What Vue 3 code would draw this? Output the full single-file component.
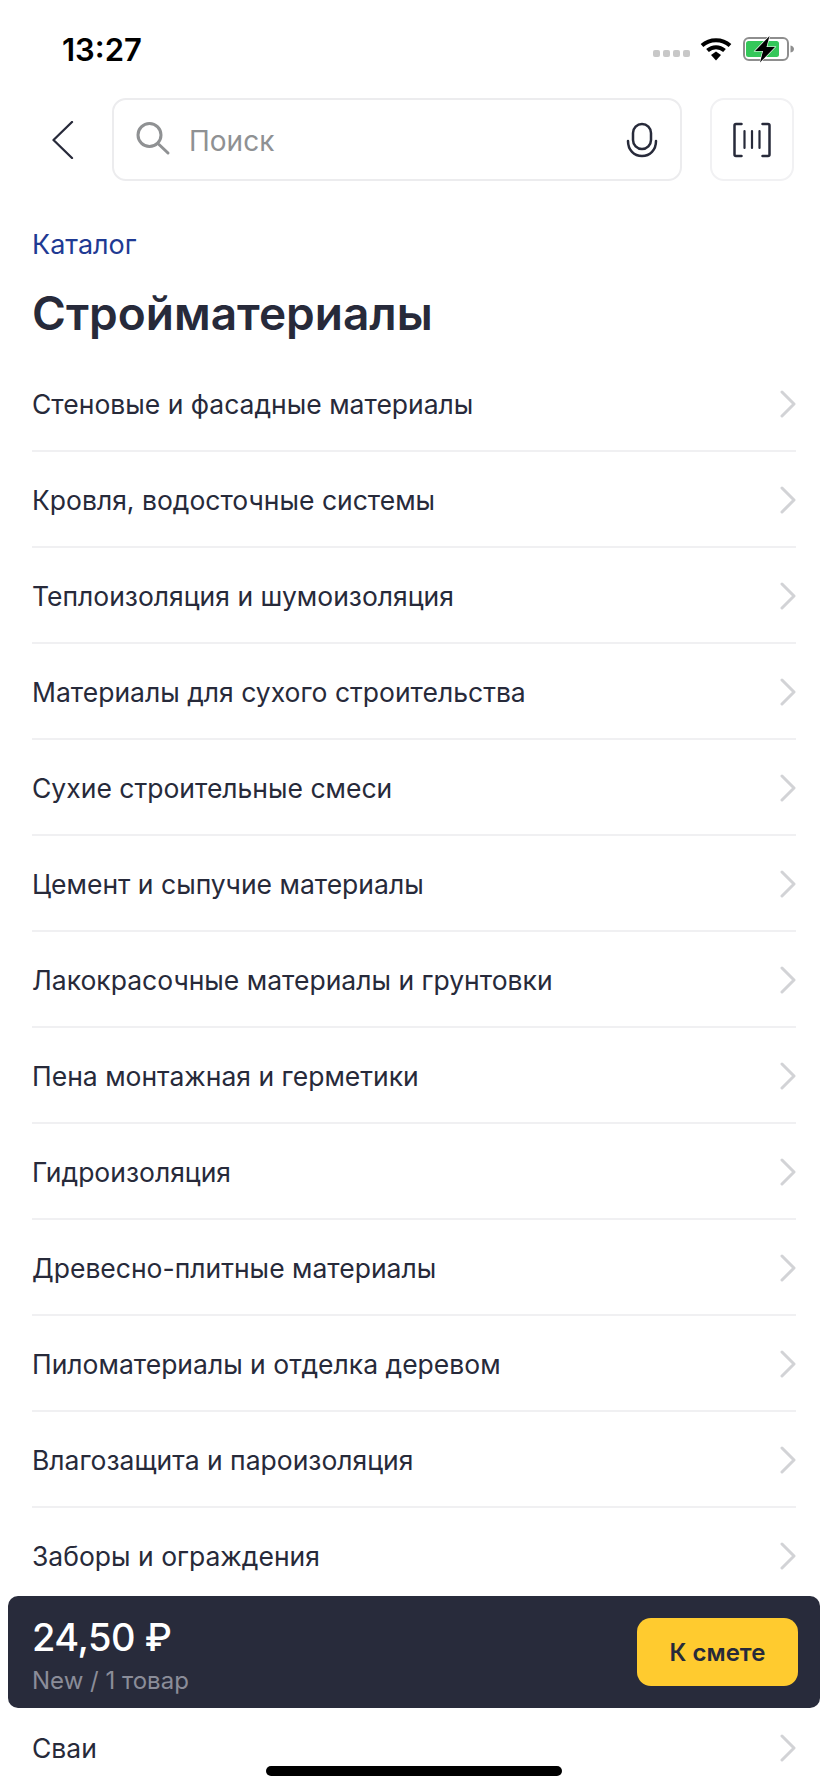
<script setup>
// categories, one entry is hidden under the estimate bar
const categories = [
  'Стеновые и фасадные материалы',
  'Кровля, водосточные системы',
  'Теплоизоляция и шумоизоляция',
  'Материалы для сухого строительства',
  'Сухие строительные смеси',
  'Цемент и сыпучие материалы',
  'Лакокрасочные материалы и грунтовки',
  'Пена монтажная и герметики',
  'Гидроизоляция',
  'Древесно-плитные материалы',
  'Пиломатериалы и отделка деревом',
  'Влагозащита и пароизоляция',
  'Заборы и ограждения',
  '',
  'Сваи'
]
</script>

<template>
  <div class="page">
    <div class="status">
      <span class="time">13:27</span>
      <div class="status-icons">
        <div class="dots"><i></i><i></i><i></i><i></i></div>
        <svg class="wifi" width="32" height="24" viewBox="0 0 32 24">
          <path d="M2 8.500C9.800 1.500 22.200 1.500 30 8.500" fill="none" stroke="#000" stroke-width="4" />
          <path d="M7.500 13.500C12.500 9 19.500 9 24.500 13.500" fill="none" stroke="#000" stroke-width="4" />
          <path d="M11 18L16 14.500L21 18L16 23.500Z" fill="#000" />
        </svg>
        <svg class="battery" width="52" height="28" viewBox="0 0 52 28">
          <rect x="1" y="3" width="44" height="22" rx="5" fill="none" stroke="#8e8e8e" stroke-width="2" />
          <rect x="3" y="6" width="33" height="16" rx="2.500" fill="#34c759" />
          <path d="M47.500 10.500C50 11 51 12.500 51 14C51 15.500 50 17 47.500 17.500Z" fill="#8e8e8e" />
          <path d="M26.500 1L12 16H20L17 27.500L32 12H23.500Z" fill="#000" stroke="#fff" stroke-width="1.200" paint-order="stroke" />
        </svg>
      </div>
    </div>

    <div class="search-row">
      <svg class="back" width="24" height="38" viewBox="0 0 24 38">
        <path d="M20 1L1.500 19L20 37" fill="none" stroke="#272a3a" stroke-width="2.300" stroke-linecap="round" stroke-linejoin="round" />
      </svg>
      <div class="search">
        <svg width="36" height="36" viewBox="0 0 36 36">
          <circle cx="13.500" cy="13" r="11.500" fill="none" stroke="#8f9193" stroke-width="3" />
          <path d="M23 22.500L32 31" stroke="#8f9193" stroke-width="3" stroke-linecap="round" />
        </svg>
        <span class="placeholder">Поиск</span>
        <svg class="mic" width="32" height="36" viewBox="0 0 32 36">
          <rect x="7" y="2" width="18" height="25" rx="9" fill="none" stroke="#272a3a" stroke-width="2.500" />
          <path d="M2 19C2 28 8 34 16 34C24 34 30 28 30 19" fill="none" stroke="#272a3a" stroke-width="2.500" stroke-linecap="round" />
        </svg>
      </div>
      <div class="scan">
        <svg width="40" height="36" viewBox="0 0 40 36">
          <path d="M9.500 2H4Q2.500 2 2.500 3.500V32.500Q2.500 34 4 34H9.500M30.500 2H36Q37.500 2 37.500 3.500V32.500Q37.500 34 36 34H30.500" fill="none" stroke="#272a3a" stroke-width="2.500" stroke-linecap="round" stroke-linejoin="round" />
          <path d="M12.500 9V26M20 9V26M27.500 9V26" stroke="#272a3a" stroke-width="2.200" stroke-linecap="round" />
        </svg>
      </div>
    </div>

    <a class="crumb">Каталог</a>
    <h1>Стройматериалы</h1>

    <ul class="list">
      <li v-for="(name, i) in categories" :key="i">
        <span>{{ name }}</span>
        <svg width="16" height="28" viewBox="0 0 16 28">
          <path d="M2 2L14 14L2 26" fill="none" stroke="#d2d3d6" stroke-width="3" stroke-linecap="round" stroke-linejoin="round" />
        </svg>
      </li>
    </ul>

    <div class="estimate">
      <div class="sum">
        <div class="price">24,50 ₽</div>
        <div class="sub">New / 1 товар</div>
      </div>
      <button class="to-estimate">К смете</button>
    </div>
    <div class="home"></div>
  </div>
</template>

<style scoped>
.page {
  position: relative;
  width: 828px;
  height: 1792px;
  overflow: hidden;
  background: #fff;
  font-family: Inter, "Noto Sans", sans-serif;
  color: #272a3a;
}

.status {
  display: flex;
  justify-content: space-between;
  align-items: center;
  height: 98px;
  padding: 0 33px 0 62px;
  box-sizing: border-box;
}

.time {
  font-size: 31px;
  font-weight: 600;
  color: #000;
}

.status-icons {
  display: flex;
  align-items: center;
}

.dots {
  display: flex;
  gap: 3px;
  margin: 8px 10px 0 0;
}

.dots i {
  width: 7px;
  height: 7px;
  border-radius: 2px;
  background: #c8c8c8;
}

.wifi {
  margin-right: 11px;
}

.search-row {
  display: flex;
  align-items: center;
  padding: 0 34px 0 52px;
}

.back {
  margin-right: 36px;
}

.search {
  display: flex;
  align-items: center;
  width: 570px;
  height: 83px;
  box-sizing: border-box;
  border: 2px solid #ececee;
  border-radius: 14px;
  padding: 0 22px 0 22px;
}

.placeholder {
  margin: 2px 0 0 17px;
  font-size: 28px;
  color: #8f9193;
}

.mic {
  margin-left: auto;
}

.scan {
  display: flex;
  align-items: center;
  justify-content: center;
  width: 84px;
  height: 83px;
  box-sizing: border-box;
  margin-left: 28px;
  border: 2px solid #f1f1f3;
  border-radius: 14px;
}

.crumb {
  display: block;
  margin: 46px 0 0 32px;
  font-size: 27px;
  line-height: 36px;
  color: #1f3a93;
}

h1 {
  margin: 20px 0 0 32px;
  font-size: 46px;
  line-height: 60px;
  font-weight: 600;
}

.list {
  list-style: none;
  margin: 13px 32px 0;
  padding: 0;
}

.list li {
  display: flex;
  justify-content: space-between;
  align-items: center;
  height: 96px;
  box-sizing: border-box;
  padding-top: 2px;
  border-bottom: 2px solid #f0f0f2;
  font-size: 26.5px;
}

.estimate {
  position: absolute;
  left: 8px;
  right: 8px;
  top: 1596px;
  height: 112px;
  display: flex;
  justify-content: space-between;
  align-items: center;
  padding: 0 22px 0 24px;
  box-sizing: border-box;
  border-radius: 10px;
  background: #282b3b;
}

.sum {
  padding-top: 4px;
}

.price {
  font-size: 38px;
  line-height: 48px;
  font-weight: 500;
  letter-spacing: -0.5px;
  color: #fff;
}

.sub {
  margin-top: 5px;
  font-size: 24px;
  line-height: 30px;
  color: #8b8d99;
}

.to-estimate {
  width: 161px;
  height: 68px;
  border: 0;
  border-radius: 14px;
  background: #ffcb2f;
  font-family: inherit;
  font-size: 24px;
  font-weight: 600;
  color: #272a3a;
}

.home {
  position: absolute;
  left: 266px;
  top: 1766px;
  width: 296px;
  height: 10px;
  border-radius: 5px;
  background: #000;
}
</style>
